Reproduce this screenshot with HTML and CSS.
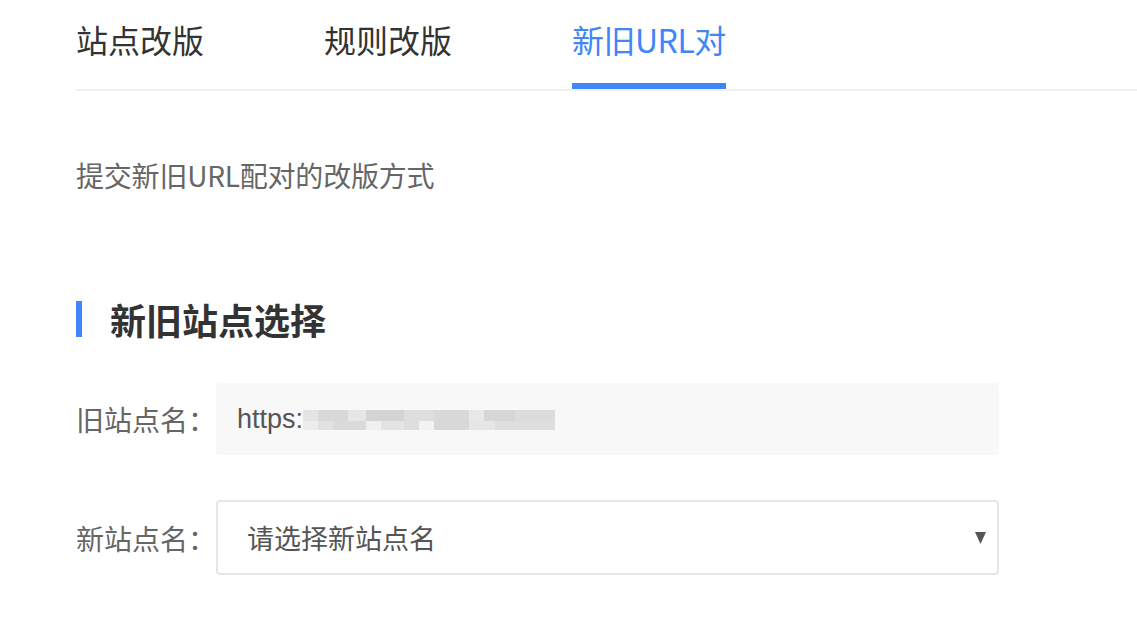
FILE: index.html
```html
<!DOCTYPE html>
<html>
<head>
<meta http-equiv="Content-Type" content="text/html; charset=utf-8"/>
<title>新旧URL对</title>
<link rel="stylesheet" href="styles.css">
</head>
<body>
<div class="page">
  <div class="tabs">
    <div class="tab">站点改版</div>
    <div class="tab">规则改版</div>
    <div class="tab active">新旧URL对</div>
  </div>

  <p class="desc">提交新旧URL配对的改版方式</p>

  <h2 class="section-title">新旧站点选择</h2>

  <div class="form-row">
    <label class="label">旧站点名：</label>
    <div class="field field-readonly">
      <span class="url">https:</span>
      <span class="mosaic">
        <span class="mosaic-row top"></span>
        <span class="mosaic-row bottom"></span>
      </span>
    </div>
  </div>

  <div class="form-row second">
    <label class="label">新站点名：</label>
    <div class="field field-select">
      <span class="placeholder">请选择新站点名</span>
      <svg class="arrow" width="11" height="12" viewBox="0 0 11 12"><polygon points="0,0 11,0 5.5,12" fill="#555"/></svg>
    </div>
  </div>
</div>
</body>
</html>
```

FILE: styles.css
```css
body {
  margin: 0;
  background-color: white;
  font-family: "Noto Sans CJK SC", "Noto Sans", sans-serif;
  color: #333;
}

.page {
  padding-left: 76px;
}

/* tabs */
.tabs {
  display: flex;
  height: 89px;
  border-bottom: 2px solid #f0f0f0;
}

.tab {
  font-size: 32px;
  line-height: 44px;
  padding-top: 17px;
  padding-bottom: 22px;
  border-bottom: 6px solid transparent;
  margin-right: 120px;
  color: #333;
  white-space: nowrap;
}

.tab.active {
  color: #4086f8;
  border-bottom-color: #4086f8;
  letter-spacing: -0.5px;
}

.desc {
  margin: 64px 0 0;
  font-size: 28px;
  line-height: 40px;
  color: #666;
  letter-spacing: -0.2px;
}

.section-title {
  margin: 106px 0 0;
  font-size: 36px;
  line-height: 36px;
  font-weight: bold;
  color: #333;
  border-left: 6px solid #4086f8;
  padding-left: 28px;
}

/* form */
.form-row {
  display: flex;
  align-items: center;
  margin-top: 46px;
}

.form-row.second {
  margin-top: 45px;
}

.label {
  width: 140px;
  font-size: 28px;
  color: #666;
  white-space: nowrap;
}

.field {
  width: 783px;
  box-sizing: border-box;
  border-radius: 4px;
  display: flex;
  align-items: center;
}

.field-readonly {
  height: 72px;
  background-color: #f8f8f8;
  padding-left: 21px;
}

.url {
  font-family: "Liberation Sans", Arial, sans-serif;
  font-size: 27px;
  color: #555;
}

.mosaic {
  display: flex;
  flex-direction: column;
  margin-left: 0;
  margin-top: 2px;
}

.mosaic-row {
  display: block;
  width: 252px;
}

.mosaic-row.top {
  height: 11px;
  background: linear-gradient(to right,
    #e4e4e4 0, #e4e4e4 6%, #d8d8d8 6%, #d8d8d8 18%, #e6e6e6 18%, #e6e6e6 25%,
    #d4d4d4 25%, #d4d4d4 40%, #dedede 40%, #dedede 52%, #d9d9d9 52%, #d9d9d9 66%,
    #e8e8e8 66%, #e8e8e8 72%, #d6d6d6 72%, #d6d6d6 84%, #dcdcdc 84%, #dcdcdc 100%);
}

.mosaic-row.bottom {
  height: 9px;
  background: linear-gradient(to right,
    #ececec 0, #ececec 6%, #e2e2e2 6%, #e2e2e2 12%, #dadada 12%, #dadada 25%,
    #f0f0f0 25%, #f0f0f0 31%, #e4e4e4 31%, #e4e4e4 40%, #dedede 40%, #dedede 46%,
    #f2f2f2 46%, #f2f2f2 52%, #d8d8d8 52%, #d8d8d8 66%, #e6e6e6 66%, #e6e6e6 76%,
    #dedede 76%, #dedede 100%);
}

.field-select {
  height: 75px;
  border: 2px solid #e6e6e6;
  background-color: white;
  padding-left: 29px;
  padding-right: 11px;
  justify-content: space-between;
}

.placeholder {
  font-size: 27px;
  color: #555;
}

.arrow {
  display: block;
}
```
